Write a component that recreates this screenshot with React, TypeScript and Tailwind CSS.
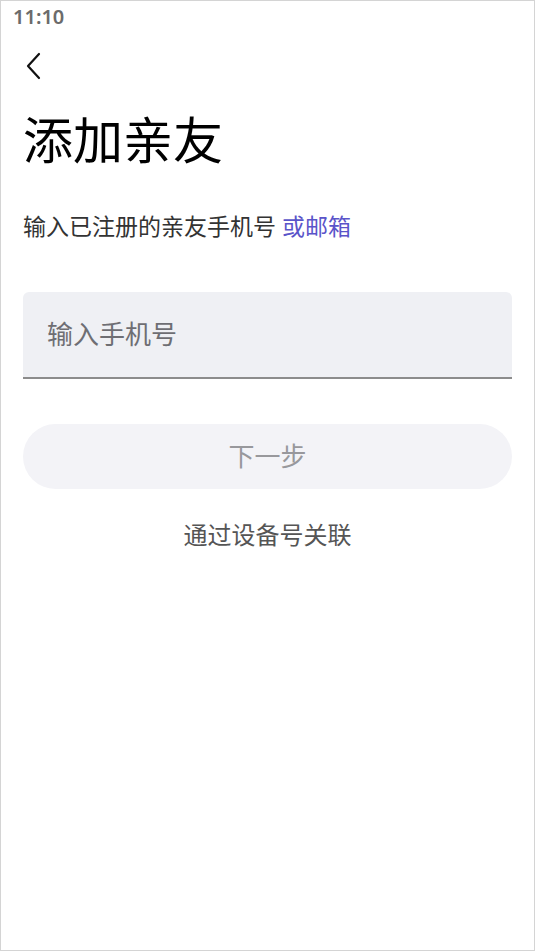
const FONT = { fontFamily: '"Noto Sans", "Noto Sans CJK SC", sans-serif' };

function StatusBar() {
  return (
    <div className="h-[34px] px-[12px] pt-[4px]">
      <span className="text-[20px] font-semibold leading-[24px] text-[#6b6b6b]">11:10</span>
    </div>
  );
}

function BackButton() {
  return (
    <button className="ml-[18px] mt-[15px] flex h-[32px] w-[28px] items-center justify-center">
      <svg width="16" height="28" viewBox="0 0 16 28" fill="none">
        <path d="M14 2 L3 14 L14 26" stroke="#111" strokeWidth="2.2" strokeLinecap="round" strokeLinejoin="round" />
      </svg>
    </button>
  );
}

export default function App() {
  return (
    <div
      className="box-border h-[951px] w-[535px] overflow-hidden border border-[#d4d4d4] bg-white"
      style={FONT}
    >
      <StatusBar />
      <BackButton />

      <div className="px-[22px]">
        <h1 className="mt-[28px] text-[50px] font-normal leading-[60px] text-black">添加亲友</h1>

        <p className="mt-[41px] text-[23px] leading-[30px] text-[#333]">
          输入已注册的亲友手机号 <span className="text-[#5a54c9]">或邮箱</span>
        </p>

        <div className="mt-[51px] flex h-[87px] items-center rounded-t-[6px] border-b-2 border-[#8c8c8c] bg-[#eff0f4] px-[24px]">
          <span className="text-[26px] text-[#6e6e73]">输入手机号</span>
        </div>

        <button className="mt-[45px] flex h-[65px] w-full items-center justify-center rounded-full bg-[#f3f3f7] text-[26px] text-[#98989c]">
          下一步
        </button>

        <div className="mt-[30px] text-center text-[24px] leading-[32px] text-[#555]">通过设备号关联</div>
      </div>
    </div>
  );
}
